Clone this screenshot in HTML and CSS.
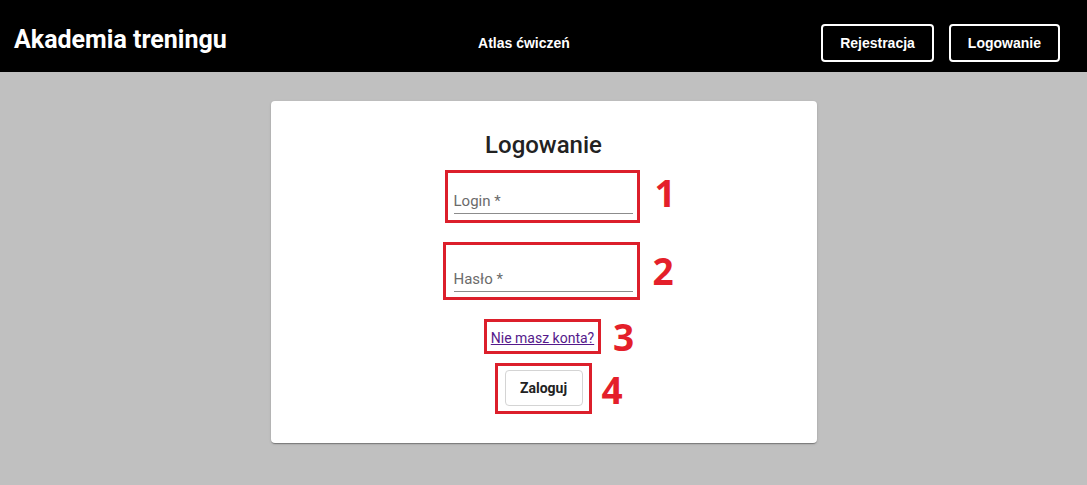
FILE: index.html
```html
<!DOCTYPE html>
<html lang="pl">
<head>
<meta charset="utf-8">
<title>Akademia treningu</title>
<link rel="stylesheet" href="styles.css">
</head>
<body>
<header class="topbar">
  <div class="brand">Akademia treningu</div>
  <nav class="nav"><a class="nav-link" href="#">Atlas ćwiczeń</a></nav>
  <div class="actions">
    <a class="btn-outline" href="#">Rejestracja</a>
    <a class="btn-outline" href="#">Logowanie</a>
  </div>
</header>
<main class="page">
  <section class="card">
    <h1 class="card-title">Logowanie</h1>
    <div class="mark mark-1">
      <div class="field"><span class="field-label">Login *</span></div>
      <span class="num">1</span>
    </div>
    <div class="mark mark-2">
      <div class="field"><span class="field-label">Hasło *</span></div>
      <span class="num">2</span>
    </div>
    <div class="mark mark-3">
      <a class="link" href="#">Nie masz konta?</a>
      <span class="num">3</span>
    </div>
    <div class="mark mark-4">
      <button class="submit" type="button">Zaloguj</button>
      <span class="num">4</span>
    </div>
  </section>
</main>
</body>
</html>
```

FILE: styles.css
```css
html, body {
  margin: 0;
  padding: 0;
}
body {
  background: #c0c0c0;
  font-family: Roboto, "Liberation Sans", Arial, sans-serif;
  min-height: 485px;
}
.topbar {
  height: 72px;
  background: #000;
  display: flex;
  align-items: center;
  justify-content: space-between;
  padding: 0 27px 0 14px;
  box-sizing: border-box;
}
.brand {
  color: #fff;
  font-family: Roboto, sans-serif;
  font-weight: 700;
  font-size: 25px;
  line-height: 29px;
  margin-top: 7px;
}
.nav {
  margin-top: 12px;
}
.nav-link {
  color: #fff;
  text-decoration: none;
  font-family: "Liberation Sans", Arial, sans-serif;
  font-weight: 700;
  font-size: 14px;
}
.actions {
  display: flex;
  gap: 15px;
  margin-top: 13px;
}
.btn-outline {
  display: flex;
  align-items: center;
  justify-content: center;
  height: 38px;
  box-sizing: border-box;
  padding: 0 17px;
  border: 2px solid #fff;
  border-radius: 4px;
  color: #fff;
  text-decoration: none;
  font-family: "Liberation Sans", Arial, sans-serif;
  font-weight: 700;
  font-size: 14px;
}
.page {
  display: flex;
  justify-content: center;
  padding-top: 29px;
}
.card {
  width: 546px;
  background: #fff;
  border-radius: 4px;
  box-shadow: 0 2px 1px -1px rgba(0,0,0,0.2), 0 1px 1px 0 rgba(0,0,0,0.14), 0 1px 3px 0 rgba(0,0,0,0.12);
  display: flex;
  flex-direction: column;
  align-items: center;
  padding: 30px 0 29px;
  box-sizing: border-box;
}
.card-title {
  margin: 0 0 11px;
  font-family: Roboto, sans-serif;
  font-weight: 500;
  font-size: 24px;
  line-height: 28px;
  color: #222;
}
.mark {
  position: relative;
  border: 3px solid #dc1f2b;
  box-sizing: border-box;
}
.num {
  position: absolute;
  top: 50%;
  transform: translateY(-50%);
  color: #e41f2a;
  font-family: "Open Sans", "Liberation Sans", sans-serif;
  font-weight: 700;
  font-size: 37px;
  line-height: 40px;
}
.mark-1 {
  width: 195px;
  height: 53px;
  padding: 0 4px 6px 6px;
  margin-left: -3px;
}
.mark-1 .num { left: 207px; margin-top: -4px; }
.mark-2 {
  width: 197px;
  height: 58px;
  padding: 0 4px 5px 8px;
  margin-top: 19px;
  margin-left: -5px;
}
.mark-2 .num { left: 207px; }
.field {
  height: 100%;
  border-bottom: 1px solid #8c8c8c;
  display: flex;
  align-items: flex-end;
  box-sizing: border-box;
  padding-bottom: 3px;
}
.field-label {
  font-family: Roboto, sans-serif;
  font-size: 15px;
  line-height: 18px;
  color: #6b6b6b;
}
.mark-3 {
  width: 117px;
  height: 35px;
  margin-top: 19px;
  margin-left: -2px;
  display: flex;
  align-items: center;
  justify-content: center;
  padding-top: 3px;
}
.mark-3 .num { left: 126px; }
.link {
  color: #551a8b;
  font-family: Roboto, sans-serif;
  font-size: 14px;
  text-decoration: underline;
}
.mark-4 {
  width: 97px;
  height: 51px;
  margin-top: 9px;
  margin-left: -1px;
  display: flex;
  align-items: center;
  justify-content: center;
}
.mark-4 .num { left: 104px; margin-top: 1px; }
.submit {
  width: 78px;
  height: 36px;
  background: #fff;
  border: 1px solid #d4d4d4;
  border-radius: 4px;
  font-family: Roboto, sans-serif;
  font-weight: 700;
  font-size: 14px;
  color: #222;
  margin-left: 1px;
  margin-bottom: 2px;
}
```
